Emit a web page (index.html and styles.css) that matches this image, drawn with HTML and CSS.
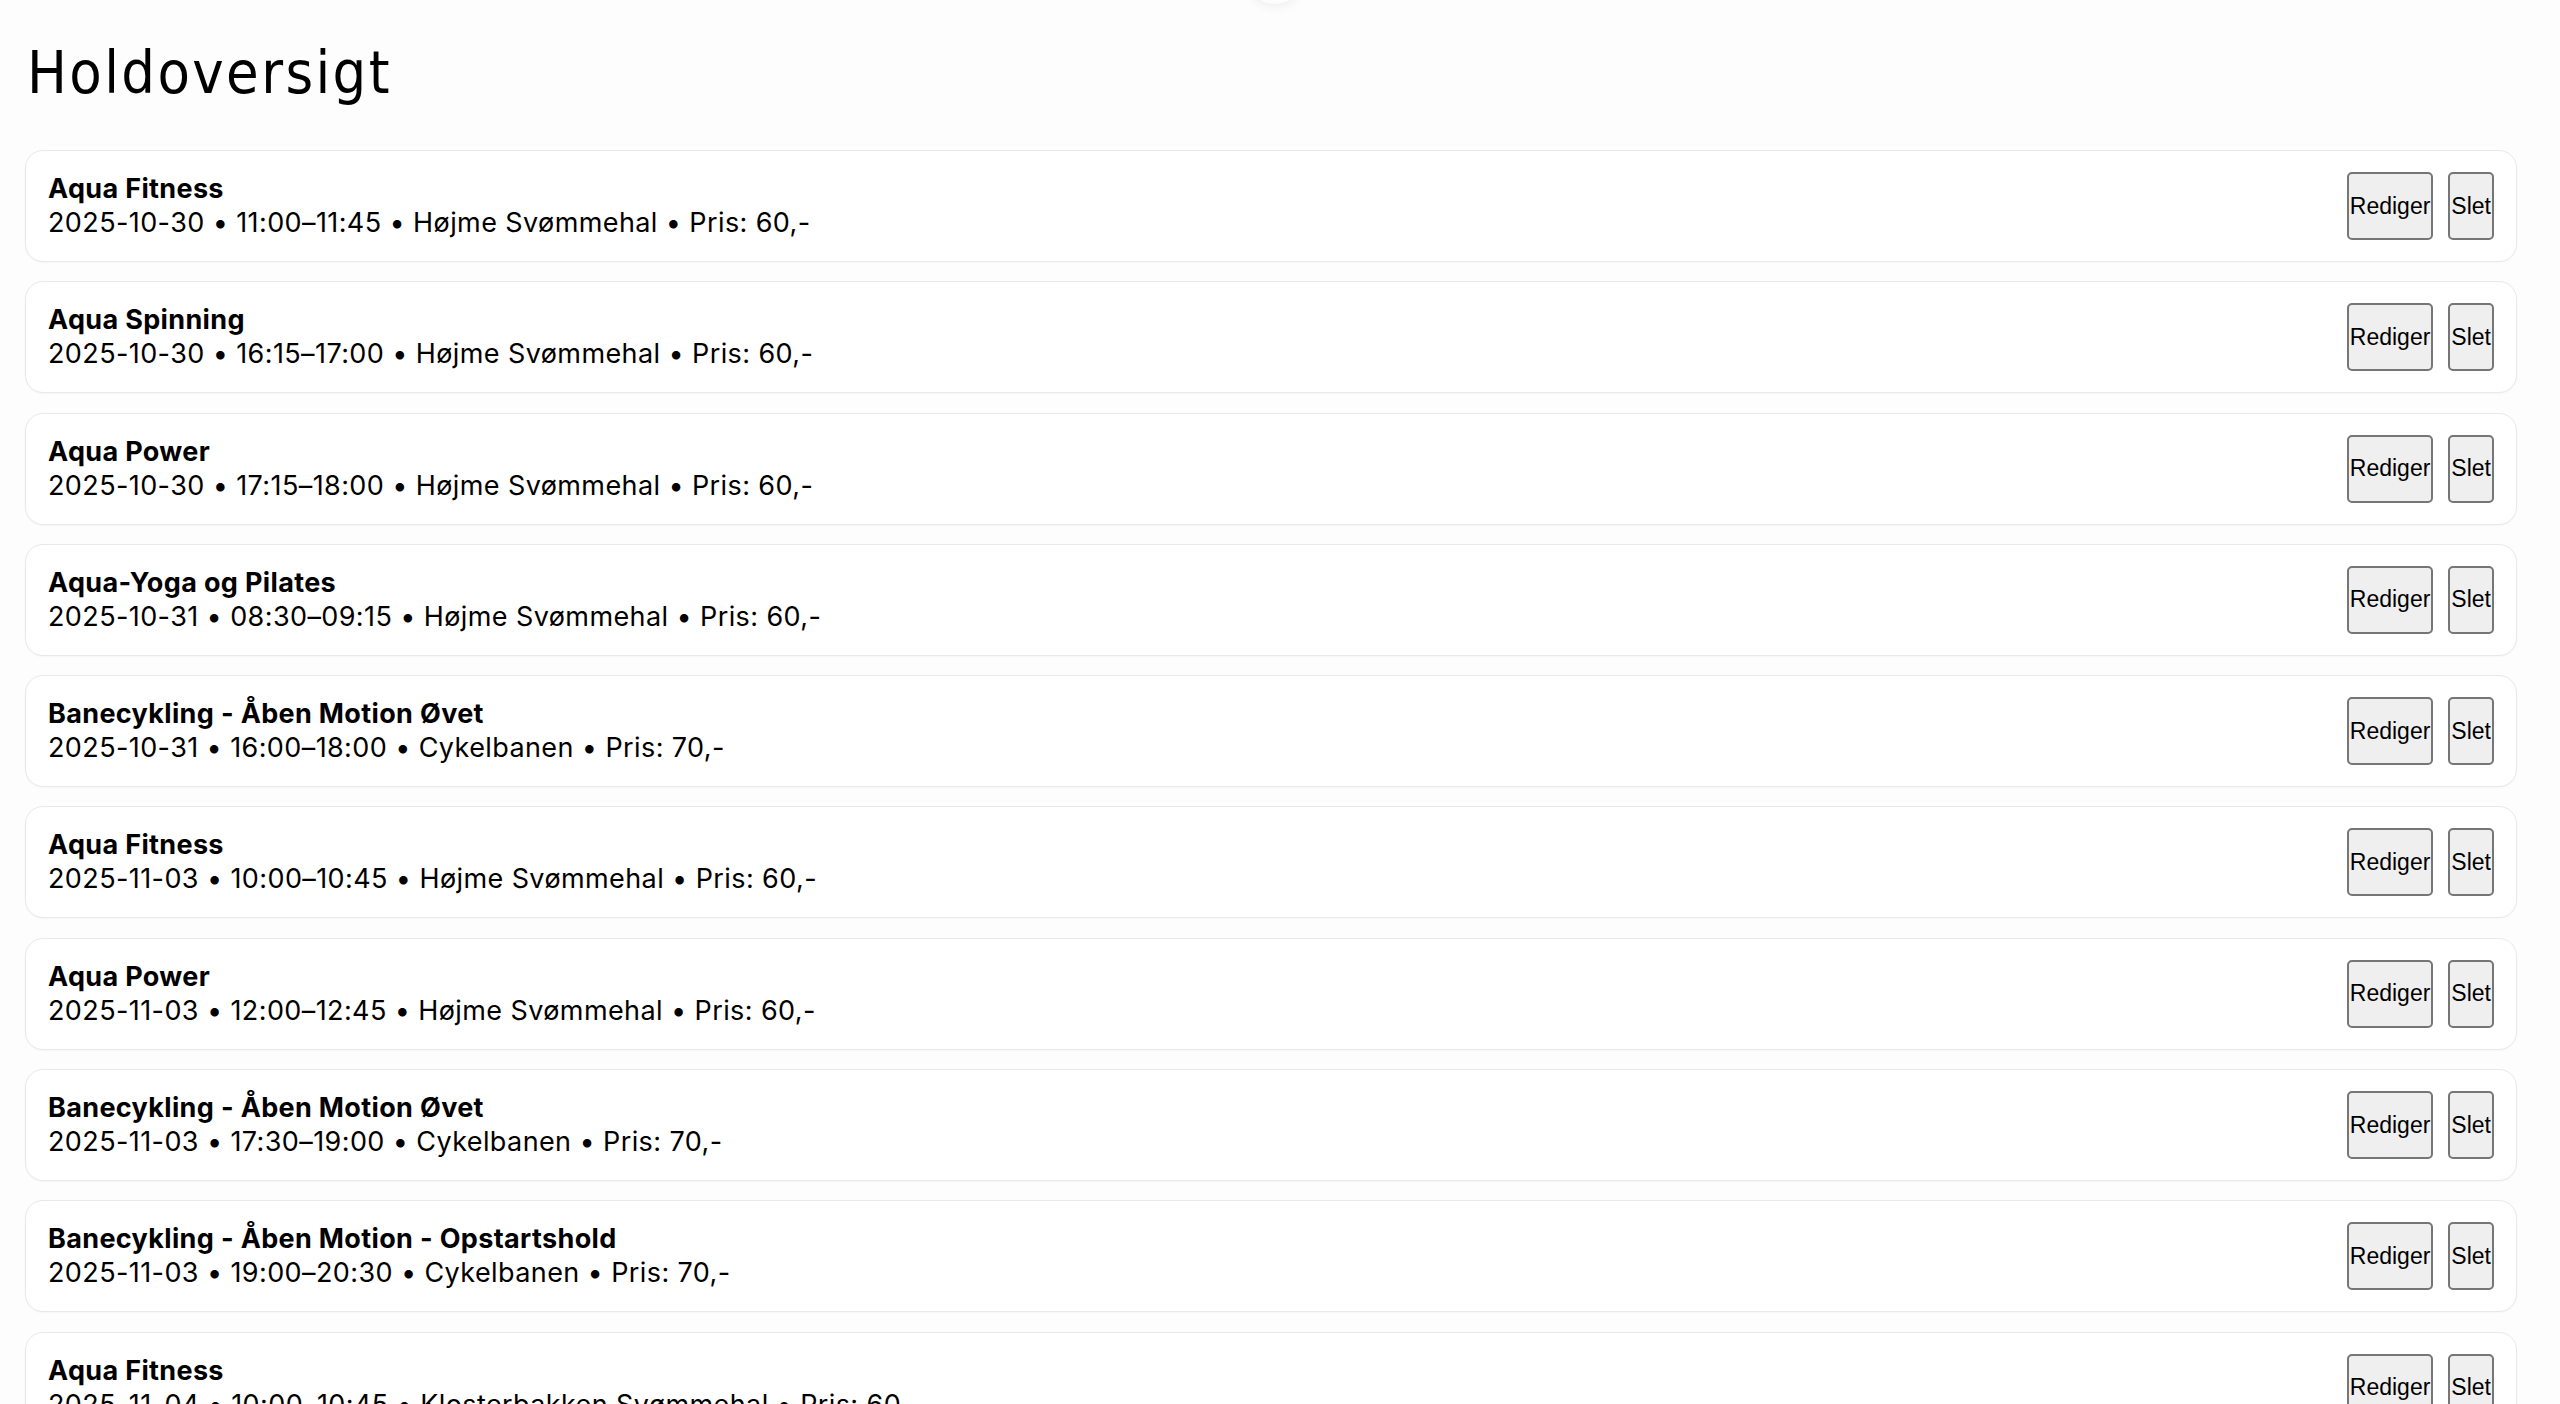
FILE: index.html
```html
<!DOCTYPE html>
<html lang="da">
<head>
<meta charset="utf-8">
<title>Holdoversigt</title>
<link rel="stylesheet" href="styles.css">
</head>
<body>
<div class="peek"></div>
<main class="page">
  <h1 class="title">Holdoversigt</h1>
  <ul class="list">
    <li class="card"><div class="info"><div class="name">Aqua Fitness</div><div class="meta">2025-10-30 • 11:00–11:45 • Højme Svømmehal • Pris: 60,-</div></div><div class="actions"><button class="btn">Rediger</button><button class="btn">Slet</button></div></li>
    <li class="card"><div class="info"><div class="name">Aqua Spinning</div><div class="meta">2025-10-30 • 16:15–17:00 • Højme Svømmehal • Pris: 60,-</div></div><div class="actions"><button class="btn">Rediger</button><button class="btn">Slet</button></div></li>
    <li class="card"><div class="info"><div class="name">Aqua Power</div><div class="meta">2025-10-30 • 17:15–18:00 • Højme Svømmehal • Pris: 60,-</div></div><div class="actions"><button class="btn">Rediger</button><button class="btn">Slet</button></div></li>
    <li class="card"><div class="info"><div class="name">Aqua-Yoga og Pilates</div><div class="meta">2025-10-31 • 08:30–09:15 • Højme Svømmehal • Pris: 60,-</div></div><div class="actions"><button class="btn">Rediger</button><button class="btn">Slet</button></div></li>
    <li class="card"><div class="info"><div class="name">Banecykling - Åben Motion Øvet</div><div class="meta">2025-10-31 • 16:00–18:00 • Cykelbanen • Pris: 70,-</div></div><div class="actions"><button class="btn">Rediger</button><button class="btn">Slet</button></div></li>
    <li class="card"><div class="info"><div class="name">Aqua Fitness</div><div class="meta">2025-11-03 • 10:00–10:45 • Højme Svømmehal • Pris: 60,-</div></div><div class="actions"><button class="btn">Rediger</button><button class="btn">Slet</button></div></li>
    <li class="card"><div class="info"><div class="name">Aqua Power</div><div class="meta">2025-11-03 • 12:00–12:45 • Højme Svømmehal • Pris: 60,-</div></div><div class="actions"><button class="btn">Rediger</button><button class="btn">Slet</button></div></li>
    <li class="card"><div class="info"><div class="name">Banecykling - Åben Motion Øvet</div><div class="meta">2025-11-03 • 17:30–19:00 • Cykelbanen • Pris: 70,-</div></div><div class="actions"><button class="btn">Rediger</button><button class="btn">Slet</button></div></li>
    <li class="card"><div class="info"><div class="name">Banecykling - Åben Motion - Opstartshold</div><div class="meta">2025-11-03 • 19:00–20:30 • Cykelbanen • Pris: 70,-</div></div><div class="actions"><button class="btn">Rediger</button><button class="btn">Slet</button></div></li>
    <li class="card"><div class="info"><div class="name">Aqua Fitness</div><div class="meta">2025-11-04 • 10:00–10:45 • Klosterbakken Svømmehal • Pris: 60,-</div></div><div class="actions"><button class="btn">Rediger</button><button class="btn">Slet</button></div></li>
  </ul>
</main>
</body>
</html>
```

FILE: styles.css
```css
html, body {
  margin: 0;
  padding: 0;
  height: 100%;
  overflow: hidden;
  background: #fdfdfd;
}

body {
  font-family: Inter, "Noto Sans", sans-serif;
  color: #000;
  position: relative;
}

.peek {
  position: absolute;
  top: -40px;
  left: 1250px;
  width: 50px;
  height: 44px;
  border-radius: 50%;
  background: #fdfdfd;
  box-shadow: 0 2px 12px rgba(0, 0, 0, 0.07);
}

.page {
  padding: 0 43px 0 25px;
}

.title {
  font-family: "DejaVu Sans Condensed", "DejaVu Sans", sans-serif;
  font-weight: normal;
  font-stretch: condensed;
  font-size: 59px;
  line-height: 72px;
  margin: 0;
  padding: 37px 0 41px 2px;
  letter-spacing: 2.4px;
}

.list {
  list-style: none;
  margin: 0;
  padding: 0;
  display: flex;
  flex-direction: column;
  gap: 19.3px;
}

.card {
  display: flex;
  align-items: center;
  justify-content: space-between;
  background: #fff;
  border: 1px solid #e9e9e9;
  border-radius: 18px;
  box-shadow: 0 1px 2px rgba(0, 0, 0, 0.03);
  padding: 21px 22px 21px 22px;
}

.name {
  font-size: 27px;
  font-weight: 700;
  line-height: 34px;
  letter-spacing: 0.35px;
}

.meta {
  font-size: 27px;
  line-height: 34px;
  letter-spacing: 0.4px;
}

.actions {
  display: flex;
  gap: 15px;
}

.btn {
  font-family: "Liberation Sans", Arial, sans-serif;
  font-size: 23px;
  height: 68px;
  padding: 0 1px;
  background: #efefef;
  border: 2px solid #767676;
  border-radius: 5px;
  color: #000;
}
```
